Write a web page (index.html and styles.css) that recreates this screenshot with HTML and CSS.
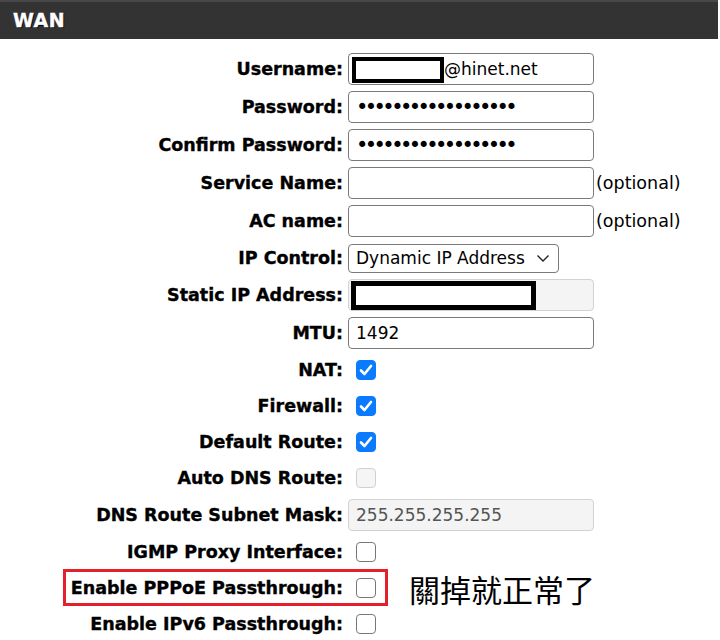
FILE: index.html
```html
<!DOCTYPE html>
<html>
<head>
<meta charset="utf-8">
<link rel="stylesheet" href="styles.css">
</head>
<body>
<div class="header"><span class="title">WAN</span></div>
<div class="form">
  <div class="row txt">
    <label class="lbl">Username:</label>
    <div class="ctl"><div class="input user"><span class="redact-small"></span><span>@hinet.net</span></div></div>
  </div>
  <div class="row txt">
    <label class="lbl">Password:</label>
    <div class="ctl"><input class="input pw" type="password" value="xxxxxxxxxxxxxxxxxx"></div>
  </div>
  <div class="row txt">
    <label class="lbl">Confirm Password:</label>
    <div class="ctl"><input class="input pw" type="password" value="xxxxxxxxxxxxxxxxxx"></div>
  </div>
  <div class="row txt">
    <label class="lbl">Service Name:</label>
    <div class="ctl"><input class="input" type="text" value=""><span class="opt">(optional)</span></div>
  </div>
  <div class="row txt">
    <label class="lbl">AC name:</label>
    <div class="ctl"><input class="input" type="text" value=""><span class="opt">(optional)</span></div>
  </div>
  <div class="row sel">
    <label class="lbl">IP Control:</label>
    <div class="ctl">
      <div class="select-wrap">
        <select class="select"><option>Dynamic IP Address</option></select>
        <svg class="chev" width="14" height="9" viewBox="0 0 14 9"><path d="M1.5 1.5 L7 7 L12.5 1.5" fill="none" stroke="#222" stroke-width="1.4"/></svg>
      </div>
    </div>
  </div>
  <div class="row txt">
    <label class="lbl">Static IP Address:</label>
    <div class="ctl"><div class="input disabled staticip"><span class="redact-big"></span></div></div>
  </div>
  <div class="row txt">
    <label class="lbl">MTU:</label>
    <div class="ctl"><input class="input" type="text" value="1492"></div>
  </div>
  <div class="row chk">
    <label class="lbl">NAT:</label>
    <div class="ctl"><span class="cb on"><svg width="20" height="20" viewBox="0 0 20 20"><path d="M5 10.5 L8.5 14 L15 6" fill="none" stroke="#fff" stroke-width="2.6" stroke-linecap="round" stroke-linejoin="round"/></svg></span></div>
  </div>
  <div class="row chk">
    <label class="lbl">Firewall:</label>
    <div class="ctl"><span class="cb on"><svg width="20" height="20" viewBox="0 0 20 20"><path d="M5 10.5 L8.5 14 L15 6" fill="none" stroke="#fff" stroke-width="2.6" stroke-linecap="round" stroke-linejoin="round"/></svg></span></div>
  </div>
  <div class="row chk">
    <label class="lbl">Default Route:</label>
    <div class="ctl"><span class="cb on"><svg width="20" height="20" viewBox="0 0 20 20"><path d="M5 10.5 L8.5 14 L15 6" fill="none" stroke="#fff" stroke-width="2.6" stroke-linecap="round" stroke-linejoin="round"/></svg></span></div>
  </div>
  <div class="row chk">
    <label class="lbl">Auto DNS Route:</label>
    <div class="ctl"><span class="cb off-dis"></span></div>
  </div>
  <div class="row txt">
    <label class="lbl">DNS Route Subnet Mask:</label>
    <div class="ctl"><input class="input disabled" type="text" value="255.255.255.255" disabled></div>
  </div>
  <div class="row chk">
    <label class="lbl">IGMP Proxy Interface:</label>
    <div class="ctl"><span class="cb"></span></div>
  </div>
  <div class="row chk marked">
    <span class="redbox"></span>
    <label class="lbl">Enable PPPoE Passthrough:</label>
    <div class="ctl"><span class="cb"></span><span class="note">關掉就正常了</span></div>
  </div>
  <div class="row chk">
    <label class="lbl">Enable IPv6 Passthrough:</label>
    <div class="ctl"><span class="cb"></span></div>
  </div>
</div>
</body>
</html>
```

FILE: styles.css
```css
html, body {
  margin: 0;
  padding: 0;
  background: #fff;
  width: 720px;
  height: 640px;
  overflow: hidden;
}
body {
  font-family: "DejaVu Sans", "Liberation Sans", sans-serif;
  color: #000;
}
.header {
  box-sizing: border-box;
  height: 39px;
  width: 718px;
  background: #333;
  border-top: 2px solid #484848;
  padding-left: 13px;
  display: flex;
  align-items: center;
}
.title {
  color: #fff;
  font-weight: bold;
  font-size: 19px;
  letter-spacing: 0.5px;
  text-shadow: 1px 1px 0 #000;
  -webkit-text-stroke: 0.4px #fff;
  margin-top: -1px;
}
.form {
  margin-top: 11px;
  display: flex;
  flex-direction: column;
}
.row {
  display: grid;
  grid-template-columns: 343px auto;
  column-gap: 5px;
  align-items: center;
  position: relative;
}
.row.txt { height: 38px; }
.row.sel { height: 36px; }
.row.chk { height: 36px; }
.lbl {
  text-align: right;
  font-weight: bold;
  font-size: 17.5px;
  white-space: nowrap;
  -webkit-text-stroke: 0.35px #000;
}
.ctl {
  display: flex;
  align-items: center;
}
.input {
  box-sizing: border-box;
  width: 246px;
  height: 32px;
  border: 1px solid #7a7a7a;
  border-radius: 4px;
  padding: 0 7px;
  font-family: "DejaVu Sans", sans-serif;
  font-size: 17px;
  color: #000;
  background: #fff;
  margin: 0;
  outline: none;
  display: flex;
  align-items: center;
}
.input.user {
  padding-left: 3px;
}
.redact-small {
  box-sizing: border-box;
  display: inline-block;
  width: 92px;
  height: 26px;
  border: 4px solid #000;
  background: #fff;
  margin-top: 2px;
}
.input.pw {
  font-size: 21px;
  letter-spacing: -3.6px;
}
.input.disabled {
  background: #f4f4f4;
  border-color: #d2d2d2;
  color: #555;
}
.staticip {
  padding-left: 2px;
}
.redact-big {
  box-sizing: border-box;
  display: inline-block;
  width: 185px;
  height: 29px;
  border: 5px solid #000;
  background: #fff;
  margin-top: 1px;
}
.opt {
  font-size: 17.5px;
  margin-left: 2px;
  white-space: nowrap;
}
.select-wrap {
  position: relative;
  display: inline-block;
}
.select {
  -webkit-appearance: none;
  appearance: none;
  box-sizing: border-box;
  width: 211px;
  height: 29px;
  border: 1px solid #7a7a7a;
  border-radius: 4px;
  background: #fff;
  font-family: "DejaVu Sans", sans-serif;
  font-size: 17px;
  color: #000;
  padding: 0 0 0 7px;
  margin: 0;
  outline: none;
}
.chev {
  position: absolute;
  right: 9px;
  top: 10px;
}
.cb {
  box-sizing: border-box;
  display: inline-block;
  width: 20px;
  height: 20px;
  border: 1.5px solid #777;
  border-radius: 4px;
  background: #fff;
  margin-left: 8px;
  flex: none;
}
.cb svg { display: block; margin: -1.5px; }
.cb.on {
  background: #0a7bff;
  border-color: #0a7bff;
}
.cb.off-dis {
  background: #f5f5f5;
  border-color: #d0d0d0;
}
.redbox {
  position: absolute;
  left: 63px;
  top: -1px;
  width: 325px;
  height: 37px;
  box-sizing: border-box;
  border: 3px solid #e4202c;
}
.note {
  font-family: "Noto Sans CJK TC", "Noto Sans CJK SC", sans-serif;
  font-size: 31px;
  margin-left: 33px;
  line-height: 1;
  white-space: nowrap;
}
```
